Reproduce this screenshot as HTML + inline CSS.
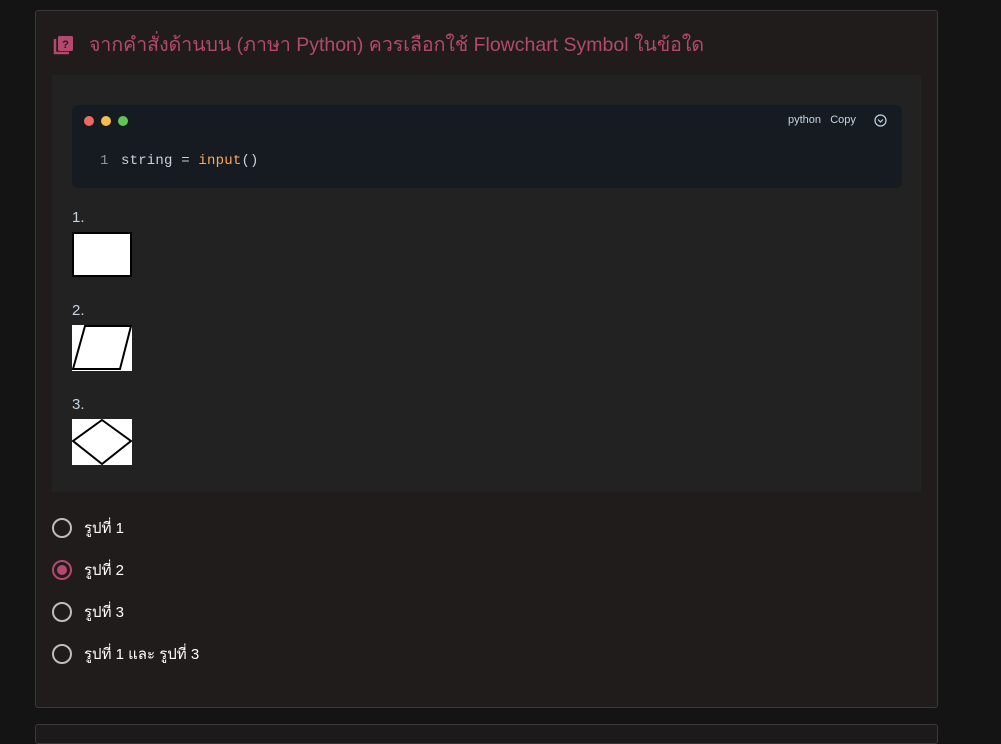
<!DOCTYPE html>
<html><head><meta charset="utf-8"><style>
*{margin:0;padding:0;box-sizing:border-box}
body{width:1001px;height:729px;background:#141414;font-family:"Liberation Sans","DejaVu Sans",sans-serif;overflow:hidden;position:relative}
.card{position:absolute;left:35px;top:10px;width:903px;height:698px;background:#201c1c;border:1px solid #3a3838;border-radius:3px}
.card2{position:absolute;left:35px;top:724px;width:903px;height:20px;background:#1c1a1a;border:1px solid #3a3838;border-radius:3px}
.title{position:absolute;left:53px;top:29px;color:#b5486f;font-size:19.5px;display:flex;align-items:center}
.panel{position:absolute;left:52px;top:75px;width:869px;height:417px;background:#232222}
.code{position:absolute;left:72px;top:105px;width:830px;height:83px;background:#161b22;border-radius:6px}
.dot{position:absolute;top:116px;width:10px;height:10px;border-radius:50%}
.mono{font-family:"Liberation Mono",monospace;font-size:14px;letter-spacing:0.2px}
.lbl{position:absolute;left:72px;color:#c5d3e0;font-size:15px}
.opt{position:absolute;left:52px;display:flex;align-items:center;color:#fff;font-size:15px}
.r{width:20px;height:20px;border:2px solid #bdbdbd;border-radius:50%;margin-right:12px;position:relative}
</style></head><body>
<div class="card"></div>
<div class="card2"></div>
<div class="title"><svg width="21" height="20" viewBox="0 0 21 20" style="margin-right:15px"><path d="M2 4v14h14" stroke="#b5486f" stroke-width="2.5" fill="none"/><rect x="5" y="1" width="15" height="15" rx="1.5" fill="#b5486f"/><text x="12.5" y="13" font-size="11" font-weight="bold" text-anchor="middle" fill="#201c1c" font-family="Liberation Sans">?</text></svg>จากคำสั่งด้านบน (ภาษา Python) ควรเลือกใช้ Flowchart Symbol ในข้อใด</div>
<div class="panel"></div>
<div class="code"></div>
<div class="dot" style="left:84px;background:#ee6a5f"></div>
<div class="dot" style="left:101px;background:#f5bd4f"></div>
<div class="dot" style="left:118px;background:#61c454"></div>
<div style="position:absolute;left:788px;top:114px;color:#c5d3e0;font-size:11px">python&nbsp;&nbsp;&nbsp;Copy</div>
<svg style="position:absolute;left:874px;top:114px" width="13" height="13" viewBox="0 0 13 13"><circle cx="6.5" cy="6.5" r="5.5" stroke="#c5d3e0" fill="none" stroke-width="1.2"/><path d="M4 5.5l2.5 2.5 2.5-2.5" stroke="#c5d3e0" fill="none" stroke-width="1.2"/></svg>
<div class="mono" style="position:absolute;left:100px;top:153px;color:#8b949e">1</div>
<div class="mono" style="position:absolute;left:121px;top:153px;color:#c9d1d9">string = <span style="color:#ffa657">input</span>()</div>
<div class="lbl" style="top:209px">1.</div>
<div style="position:absolute;left:72px;top:232px;width:60px;height:45px;background:#fff;border:2px solid #000"></div>
<div class="lbl" style="top:302px">2.</div>
<svg style="position:absolute;left:72px;top:325px" width="60" height="46"><rect width="60" height="46" fill="#fff"/><path d="M13 1H59L48 44H1Z" stroke="#000" stroke-width="2" fill="none"/></svg>
<div class="lbl" style="top:396px">3.</div>
<svg style="position:absolute;left:72px;top:419px" width="60" height="46"><rect width="60" height="46" fill="#fff"/><path d="M30 1L59 22L30 45L1 22Z" stroke="#000" stroke-width="2" fill="none"/></svg>
<div class="opt" style="top:516px"><div class="r"></div>รูปที่ 1</div>
<div class="opt" style="top:558px"><div class="r" style="border-color:#b5486f"><div style="position:absolute;left:3px;top:3px;width:10px;height:10px;border-radius:50%;background:#b5486f"></div></div>รูปที่ 2</div>
<div class="opt" style="top:600px"><div class="r"></div>รูปที่ 3</div>
<div class="opt" style="top:642px"><div class="r"></div>รูปที่ 1 และ รูปที่ 3</div>
</body></html>
